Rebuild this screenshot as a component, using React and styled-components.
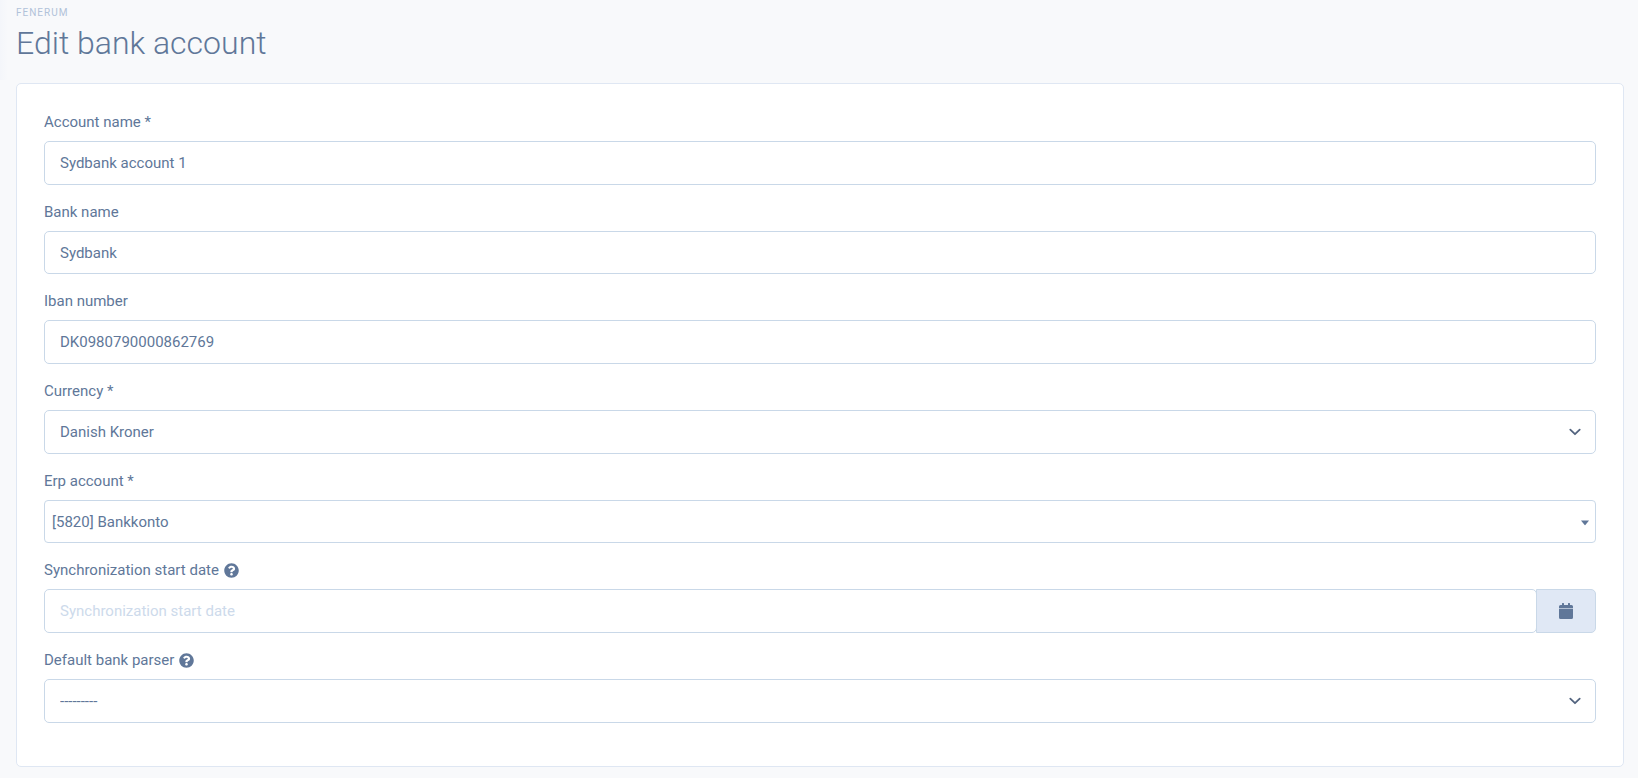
import React from "react";
import styled, { createGlobalStyle } from "styled-components";
import { FaQuestionCircle } from "react-icons/fa";

const GlobalStyle = createGlobalStyle`
  *, *::before, *::after {
    box-sizing: border-box;
  }
  body {
    margin: 0;
    background: #f8f9fb linear-gradient(to right, #f4f6fa, #f8f9fb) no-repeat;
    background-size: 8px 80px;
    color: #607799;
    font-family: Roboto, sans-serif;
    font-size: 15px;
    line-height: 24px;
  }
`;
const Page = styled.main`
  padding: 4px 14px 12px 16px;
`;
const PageHeader = styled.header`
  margin-bottom: 18px;
`;
const Brand = styled.div`
  color: #b1c2d9;
  font-size: 10px;
  line-height: 18px;
  letter-spacing: 1px;
  text-transform: uppercase;
`;
const Title = styled.h1`
  margin: 0;
  font-size: 32px;
  font-weight: 300;
  line-height: 43px;
`;
const Card = styled.section`
  padding: 26px 27px 43px;
  background-color: #fff;
  border: 1px solid #dfe7f3;
  border-radius: 5px;
`;
const Form = styled.form`
  display: flex;
  flex-direction: column;
  gap: 15px;
`;
const Group = styled.div`
  display: flex;
  flex-direction: column;
  gap: 7px;
`;
const LabelRow = styled.div`
  display: flex;
  align-items: center;
  gap: 5px;
`;
const Control = styled.div`
  position: relative;
  display: flex;
`;
const Input = styled.input`
  flex: 1;
  min-width: 0;
  height: ${({ $short }) => ($short ? "43px" : "44px")};
  padding: 0 15px;
  color: inherit;
  font: inherit;
  background-color: #fff;
  border: 1px solid #c9d8e8;
  border-radius: 5px;

  &::placeholder {
    color: #cddaeb;
    opacity: 1;
  }
`;
const Select = styled.select`
  flex: 1;
  min-width: 0;
  height: ${({ $compact }) => ($compact ? "43px" : "44px")};
  padding: 0 ${({ $compact }) => ($compact ? "7px" : "15px")};
  color: inherit;
  font: inherit;
  appearance: none;
  background-color: #fff;
  border: 1px solid #c9d8e8;
  border-radius: ${({ $compact }) => ($compact ? "4px" : "5px")};
`;
const Arrow = styled.svg`
  position: absolute;
  top: 50%;
  right: ${({ $compact }) => ($compact ? "7px" : "15px")};
  transform: translateY(-50%);
  pointer-events: none;
`;
const DateButton = styled.button`
  display: flex;
  align-items: center;
  justify-content: center;
  width: 60px;
  margin-left: -1px;
  padding: 0;
  color: inherit;
  background-color: #e0e8f5;
  border: 1px solid #c9d8e8;
  border-radius: 0 5px 5px 0;
`;

function Field({ id, label, help, children }) {
  return (
    <Group>
      <LabelRow>
        <label htmlFor={id}>{label}</label>
        {help && <FaQuestionCircle aria-hidden="true" />}
      </LabelRow>
      <Control>{children}</Control>
    </Group>
  );
}

function Chevron() {
  return (
    <Arrow width="12" height="12" viewBox="0 0 12 12" fill="none" aria-hidden="true">
      <path
        d="M1.3 3.7 6 8.2 10.7 3.7"
        stroke="#53647f"
        strokeWidth="1.8"
        strokeLinecap="round"
        strokeLinejoin="round"
      />
    </Arrow>
  );
}

function CalendarIcon() {
  return (
    <svg width="14" height="16" viewBox="0 0 14 16" fill="currentColor" aria-hidden="true">
      <path d="M3 .4a.4.4 0 0 1 .4-.4h1.2a.4.4 0 0 1 .4.4V2h4V.4a.4.4 0 0 1 .4-.4h1.2a.4.4 0 0 1 .4.4V2h1.5A1.5 1.5 0 0 1 14 3.5V5H0V3.5A1.5 1.5 0 0 1 1.5 2H3z" />
      <path d="M0 5h14v1H0z" opacity="0.35" />
      <path d="M0 6h14v8.5a1.5 1.5 0 0 1-1.5 1.5h-11A1.5 1.5 0 0 1 0 14.5z" />
    </svg>
  );
}

function App() {
  return (
    <Page>
      <GlobalStyle />
      <PageHeader>
        <Brand>Fenerum</Brand>
        <Title>Edit bank account</Title>
      </PageHeader>
      <Card>
        <Form>
          <Field id="name" label="Account name *">
            <Input id="name" defaultValue="Sydbank account 1" />
          </Field>
          <Field id="bank" label="Bank name">
            <Input id="bank" defaultValue="Sydbank" $short />
          </Field>
          <Field id="iban" label="Iban number">
            <Input id="iban" defaultValue="DK0980790000862769" />
          </Field>
          <Field id="currency" label="Currency *">
            <Select id="currency">
              <option>Danish Kroner</option>
            </Select>
            <Chevron />
          </Field>
          <Field id="erp" label="Erp account *">
            <Select id="erp" $compact>
              <option>[5820] Bankkonto</option>
            </Select>
            <Arrow $compact width="8" height="7" viewBox="0 0 8 7" aria-hidden="true">
              <path d="M0 2h8L4 7z" fill="#607799" />
            </Arrow>
          </Field>
          <Field id="start" label="Synchronization start date" help>
            <Input id="start" placeholder="Synchronization start date" />
            <DateButton type="button" aria-label="Pick a date">
              <CalendarIcon />
            </DateButton>
          </Field>
          <Field id="parser" label="Default bank parser" help>
            <Select id="parser">
              <option>---------</option>
            </Select>
            <Chevron />
          </Field>
        </Form>
      </Card>
    </Page>
  );
}

export default App;
